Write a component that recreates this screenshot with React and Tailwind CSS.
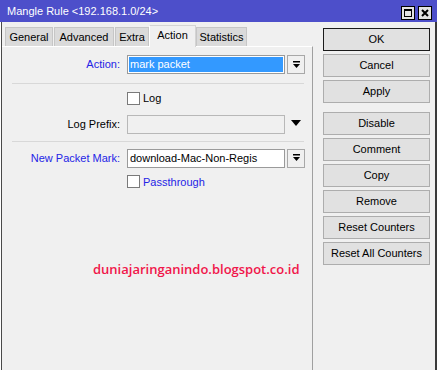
import React from 'react';

const font = { fontFamily: '"Liberation Sans", Arial, sans-serif' };

const tabs = [
  { name: 'General', w: 'w-[48px]', ml: 'ml-0' },
  { name: 'Advanced', w: 'w-[60px]', ml: 'ml-[1px]' },
  { name: 'Extra', w: 'w-[34px]', ml: 'ml-[1px]' },
  { name: 'Action', w: 'w-[47px]', ml: 'ml-0', active: true },
  { name: 'Statistics', w: 'w-[51px]', ml: 'ml-0' },
];

const DropButton = () => (
  <div className="ml-[2px] w-[18px] h-[19px] border border-[#a8a8a8] bg-[#f0f0f0] flex items-center justify-center">
    <svg width="9" height="8" viewBox="0 0 9 8">
      <rect x="1" y="0" width="7" height="1.5" fill="#000" />
      <path d="M1 3 L8 3 L4.5 7 Z" fill="#000" />
    </svg>
  </div>
);

const Checkbox = () => <div className="w-[13px] h-[13px] border border-[#7a7a7a] bg-white" />;

const Btn = ({ children, primary, extra = '' }) => (
  <div
    className={`w-[107px] h-[23px] flex items-center justify-center text-[11px] text-black bg-[#e1e1e1] border ${
      primary ? 'border-[#1a1a1a]' : 'border-[#adadad]'
    } ${extra}`}
  >
    {children}
  </div>
);

export default function App() {
  return (
    <div className="w-[437px] h-[370px] overflow-hidden bg-[#f0f0f0] flex flex-col" style={font}>
      {/* title bar */}
      <div className="h-[22px] bg-[#4d4fca] flex items-start shrink-0">
        <div className="ml-[7px] mt-[5px] text-[11px] text-white leading-[12px]">Mangle Rule &lt;192.168.1.0/24&gt;</div>
        <div className="ml-auto mr-[5px] mt-[6px] flex gap-[3px]">
          <div className="w-[14px] h-[14px] border border-black bg-[#e4e4e4] flex items-center justify-center">
            <div className="w-[8px] h-[8px] border border-black border-t-2" />
          </div>
          <div className="w-[14px] h-[14px] border border-black bg-[#e4e4e4] flex items-center justify-center">
            <svg width="8" height="8" viewBox="0 0 8 8">
              <path d="M1 1 L7 7 M7 1 L1 7" stroke="#000" strokeWidth="2" />
            </svg>
          </div>
        </div>
      </div>

      {/* body */}
      <div className="flex flex-1 border-l border-white">
        <div className="flex flex-1 border-l border-[#4a4a4a] border-r-2 border-r-[#3a3a3a]">
          {/* left side */}
          <div className="w-[311px] flex flex-col">
            <div className="h-[24px] flex items-end pl-[3px] shrink-0">
              {tabs.map((t) =>
                t.active ? (
                  <div
                    key={t.name}
                    className={`${t.w} ${t.ml} h-[22px] -mb-px relative z-10 bg-[#f0f0f0] border border-b-0 border-[#d4d4d4] border-l-white flex items-center justify-center text-[11px] pb-[2px]`}
                  >
                    {t.name}
                  </div>
                ) : (
                  <div
                    key={t.name}
                    className={`${t.w} ${t.ml} h-[19px] bg-[#dadada] border border-b-0 border-[#c6c6c6] flex items-center justify-center text-[11px]`}
                  >
                    {t.name}
                  </div>
                )
              )}
            </div>

            <div className="flex-1 border-t border-white border-r border-r-[#a0a0a0] flex flex-col text-[11px]">
              {/* Action */}
              <div className="mt-[8px] flex items-center">
                <div className="w-[118px] text-right text-[#2424e6]">Action:</div>
                <div className="ml-[7px] w-[158px] h-[19px] border border-[#9a9a9a] bg-white p-px">
                  <div className="h-full bg-[#3399ff] text-white flex items-center pl-px">mark packet</div>
                </div>
                <DropButton />
              </div>

              <div className="mt-[9px] ml-[10px] w-[292px] h-px bg-[#d8d8d8]" />

              {/* Log */}
              <div className="mt-[6px] ml-[125px] flex items-center">
                <Checkbox />
                <span className="ml-[3px] text-black">Log</span>
              </div>

              {/* Log Prefix */}
              <div className="mt-[8px] flex items-center">
                <div className="w-[118px] text-right text-black">Log Prefix:</div>
                <div className="ml-[7px] w-[158px] h-[19px] border border-[#b8b8b8] bg-[#f0f0f0]" />
                <svg className="ml-[6px] -mt-[3px]" width="10" height="6" viewBox="0 0 10 6">
                  <path d="M0 0 L10 0 L5 6 Z" fill="#000" />
                </svg>
              </div>

              <div className="mt-[7px] ml-[10px] w-[292px] h-px bg-[#d8d8d8]" />

              {/* New Packet Mark */}
              <div className="mt-[7px] flex items-center">
                <div className="w-[118px] text-right text-[#2424e6]">New Packet Mark:</div>
                <div className="ml-[7px] w-[158px] h-[19px] border border-[#9a9a9a] bg-white flex items-center pl-[2px] text-black">
                  download-Mac-Non-Regis
                </div>
                <DropButton />
              </div>

              {/* Passthrough */}
              <div className="mt-[6px] ml-[125px] flex items-center">
                <Checkbox />
                <span className="ml-[3px] text-[#2424e6]">Passthrough</span>
              </div>

              {/* watermark */}
              <div
                className="mt-[69px] ml-[91px] text-[13px] leading-[20px] font-semibold text-[#f0164a] whitespace-nowrap"
                style={{ fontFamily: '"Open Sans", sans-serif' }}
              >
                duniajaringanindo.blogspot.co.id
              </div>
            </div>
          </div>

          {/* right buttons */}
          <div className="flex-1 flex flex-col pl-[10px] pt-[6px] gap-[3px]">
            <Btn primary>OK</Btn>
            <Btn>Cancel</Btn>
            <Btn>Apply</Btn>
            <Btn extra="mt-[6px]">Disable</Btn>
            <Btn>Comment</Btn>
            <Btn>Copy</Btn>
            <Btn>Remove</Btn>
            <Btn>Reset Counters</Btn>
            <Btn>Reset All Counters</Btn>
          </div>
        </div>
      </div>
    </div>
  );
}
